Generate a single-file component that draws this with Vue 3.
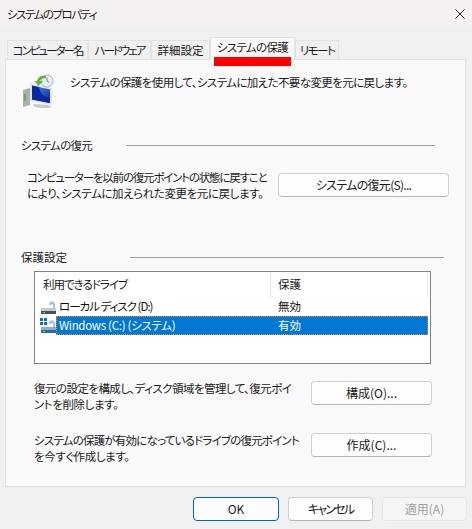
<template>
  <div class="dialog">
    <div class="titlebar">
      <span class="ls-15">システムのプロパティ</span>
      <svg class="close" width="10" height="10" viewBox="0 0 10 10">
        <path d="M.5.5l9 9M9.500.5l-9 9" stroke="#222" stroke-width="1" fill="none" />
      </svg>
    </div>

    <div class="tabs">
      <div
        v-for="tab in tabs"
        :key="tab.label"
        class="tab"
        :class="[tab.track, { active: tab.active }]"
        :style="{ width: tab.width + 'px' }"
      >
        {{ tab.label }}
      </div>
      <div class="marker"></div>
    </div>

    <div class="panel">
      <div class="intro">
        <svg class="sys-icon" width="34" height="36" viewBox="0 0 34 36">
          <defs>
            <linearGradient id="screen" x1="0" y1="0" x2="1" y2="1">
              <stop offset="0" stop-color="#4f9bea" />
              <stop offset="1" stop-color="#0a1f96" />
            </linearGradient>
          </defs>
          <path d="M3 16l7-2v17l-7 2z" fill="#a9b0ae" />
          <path d="M4 20h2v7H4z" fill="#6da85c" />
          <path d="M10 9l22 5v17L10 27z" fill="#dfe4e8" />
          <path d="M12 11.500l18 4v13.500l-18-3.500z" fill="url(#screen)" />
          <path d="M12 11.500l7 1.500c1 6 5 10 11 11v5l-18-3.500z" fill="#0b2a9f" />
          <path d="M14 30l14 1 4 2c-6 2-15 1-19-1z" fill="#c6cbce" />
          <circle cx="27" cy="7" r="6" fill="#eaf0f4" stroke="#a4b1bc" />
          <path d="M27 3.500V7l2.500 1.500" stroke="#71818f" fill="none" />
          <path d="M26 2c-5-1-8 1-9 5h-2.500l4 5 4.500-5h-3c1-2 3-3 6-2.500z" fill="#62b33f" />
        </svg>
        <p class="ls-6">システムの保護を使用して、システムに加えた不要な変更を元に戻します。</p>
      </div>

      <div class="group-title restore-title">
        <span class="ls-7">システムの復元</span>
        <i></i>
      </div>
      <div class="action restore-action">
        <p>
          <span class="ls-12">コンピューターを以前の復元ポイントの状態に戻すこと</span><br />
          <span class="ls-4">により、システムに加えられた変更を元に戻します。</span>
        </p>
        <button class="btn restore-btn"><span class="ls-7">システムの復元(S)...</span></button>
      </div>

      <div class="group-title protect-title">
        <span>保護設定</span>
        <i></i>
      </div>
      <div class="listbox">
        <div class="list-head">
          <div class="col-name ls-10">利用できるドライブ</div>
          <div class="col-state">保護</div>
        </div>
        <div v-for="drive in drives" :key="drive.name" class="row">
          <svg class="drive-icon" width="16" height="18" viewBox="0 0 16 18">
            <path v-if="drive.system" d="M0 1h3v3H0zM4 1h3v3H4zM0 5h3v3H0zM4 5h3v3H4z" fill="#0a72c8" />
            <path d="M9 7c0-5 6-5 6 0v5h-2V7c0-1-2-1-2 0z" fill="#a9c3dc" />
            <path d="M1 10h15v3H1z" :fill="drive.system ? '#8fb0cc' : '#c4cad0'" />
            <path d="M1 13h15v3H1z" :fill="drive.system ? '#2c6b9a' : '#4a5258'" />
            <path d="M3 14h2v1H3z" fill="#58d05a" />
          </svg>
          <div class="cell-name" :class="{ selected: drive.system }">
            <span :class="drive.track">{{ drive.name }}</span>
            <span class="cell-state">{{ drive.state }}</span>
          </div>
        </div>
      </div>

      <div class="action config-action">
        <p>
          <span class="ls-5">復元の設定を構成し、ディスク領域を管理して、復元ポイ</span><br />
          <span class="ls-4">ントを削除します。</span>
        </p>
        <button class="btn">構成(O)...</button>
      </div>
      <div class="action create-action">
        <p>
          <span class="ls-8">システムの保護が有効になっているドライブの復元ポイント</span><br />
          <span class="ls-4">を今すぐ作成します。</span>
        </p>
        <button class="btn">作成(C)...</button>
      </div>
    </div>

    <div class="footer">
      <button class="btn foot primary">OK</button>
      <button class="btn foot"><span class="ls-18">キャンセル</span></button>
      <button class="btn foot disabled">適用(A)</button>
    </div>
  </div>
</template>

<script setup>
const tabs = [
  { label: 'コンピューター名', width: 81, track: 'ls-20' },
  { label: 'ハードウェア', width: 63, track: 'ls-20' },
  { label: '詳細設定', width: 59 },
  { label: 'システムの保護', width: 85, active: true, track: 'ls-7' },
  { label: 'リモート', width: 44, track: 'ls-15' }
]

const drives = [
  { name: 'ローカル ディスク (D:)', state: '無効', system: false, track: 'ls-10' },
  { name: 'Windows (C:) (システム)', state: '有効', system: true, track: 'ls-3' }
]
</script>

<style>
html,
body {
  margin: 0;
  background: #f0f0f0;
}
</style>

<style scoped>
.dialog {
  width: 472px;
  height: 529px;
  overflow: hidden;
  background: #f0f0f0;
  color: #1a1a1a;
  font-family: "Noto Sans CJK JP", "Noto Sans", sans-serif;
  font-size: 11.5px;
  line-height: 16px;
  font-feature-settings: "palt";
}

/* the reference font has narrow kana, so lines get their own tracking */
.ls-3 { letter-spacing: -0.3px; }
.ls-4 { letter-spacing: -0.4px; }
.ls-5 { letter-spacing: -0.55px; }
.ls-6 { letter-spacing: -0.6px; }
.ls-7 { letter-spacing: -0.7px; }
.ls-8 { letter-spacing: -0.8px; }
.ls-10 { letter-spacing: -1px; }
.ls-12 { letter-spacing: -1.2px; }
.ls-15 { letter-spacing: -1.5px; }
.ls-18 { letter-spacing: -1.8px; }
.ls-20 { letter-spacing: -2px; }

p {
  margin: 0;
  white-space: nowrap;
}

.titlebar {
  height: 28px;
  padding: 0 7px;
  display: flex;
  align-items: center;
  justify-content: space-between;
  background: #f6f1f1;
}

.tabs {
  position: relative;
  height: 31px;
  padding-left: 7px;
  display: flex;
  align-items: flex-end;
}

.tab {
  height: 19px;
  box-sizing: border-box;
  display: flex;
  align-items: center;
  justify-content: center;
  background: #f0f0f0;
  border: 1px solid #e2e2e2;
  border-bottom: none;
  white-space: nowrap;
}

.tab.active {
  height: 23px;
  padding-bottom: 5px;
  background: #f9f9f9;
  margin-bottom: -1px;
  z-index: 1;
}

.marker {
  position: absolute;
  left: 214px;
  top: 29px;
  width: 77px;
  height: 9px;
  background: #ff0000;
  z-index: 2;
}

.panel {
  box-sizing: border-box;
  width: 461px;
  height: 428px;
  margin-left: 5px;
  background: #f9f9f9;
  border: 1px solid #e2e2e2;
  display: flex;
  flex-direction: column;
}

.intro {
  height: 38px;
  margin: 14px 0 0 14px;
  display: flex;
  gap: 16px;
}

.sys-icon {
  flex: none;
}

.group-title {
  display: flex;
  align-items: center;
  margin-left: 15px;
}

.group-title span {
  flex: none;
}

.group-title i {
  height: 1px;
  background: #a0a0a0;
}

.restore-title {
  margin-top: 25px;
}

.restore-title span {
  width: 105px;
}

.restore-title i {
  width: 309px;
}

.protect-title {
  margin-top: 48px;
}

.protect-title span {
  width: 109px;
}

.protect-title i {
  width: 314px;
}

.action {
  height: 32px;
  display: flex;
  justify-content: space-between;
  align-items: center;
}

.restore-action {
  margin: 16px 16px 0 21px;
}

.config-action {
  margin: 13px 33px 0 28px;
}

.create-action {
  margin: 20px 33px 0 28px;
}

.config-action p,
.create-action p {
  margin-top: 5px;
}

.btn {
  flex: none;
  box-sizing: border-box;
  width: 121px;
  height: 24px;
  padding: 0 0 1px;
  background: #fdfdfd;
  border: 1px solid #d0d0d0;
  border-bottom-color: #b5b5b5;
  border-radius: 4px;
  color: #1a1a1a;
  font: inherit;
  font-size: 12px;
  font-feature-settings: inherit;
}

.restore-btn {
  width: 171px;
}

.listbox {
  box-sizing: border-box;
  width: 397px;
  height: 93px;
  margin: 6px 0 0 28px;
  background: #fff;
  border: 1px solid #82828c;
  padding-right: 2px;
}

.list-head {
  display: flex;
  height: 25px;
  line-height: 24px;
}

.col-name {
  box-sizing: border-box;
  width: 236px;
  padding-left: 8px;
  border-right: 1px solid #e5e5e5;
}

.col-state {
  box-sizing: border-box;
  flex: 1;
  padding-left: 7px;
  border-right: 1px solid #e5e5e5;
}

.row {
  display: flex;
  align-items: center;
  height: 19px;
  color: #111;
}

.drive-icon {
  flex: none;
  margin-left: 5px;
}

.cell-name {
  flex: 1;
  height: 19px;
  box-sizing: border-box;
  padding-left: 2px;
  line-height: 17px;
  display: flex;
  border: 1px dotted transparent;
}

.cell-name span:first-child {
  width: 219px;
}

.cell-name.selected {
  background: #0078d4;
  border-color: #f08a24;
  color: #fff;
}

.footer {
  display: flex;
  justify-content: flex-end;
  gap: 9px;
  padding: 10px 5px 0 0;
}

.foot {
  width: 85px;
}

.primary {
  width: 86px;
  border: 1px solid #0067c0;
}

.disabled {
  background: #f5f5f5;
  border-color: #e6e6e6;
  color: #a0a0a0;
}
</style>
